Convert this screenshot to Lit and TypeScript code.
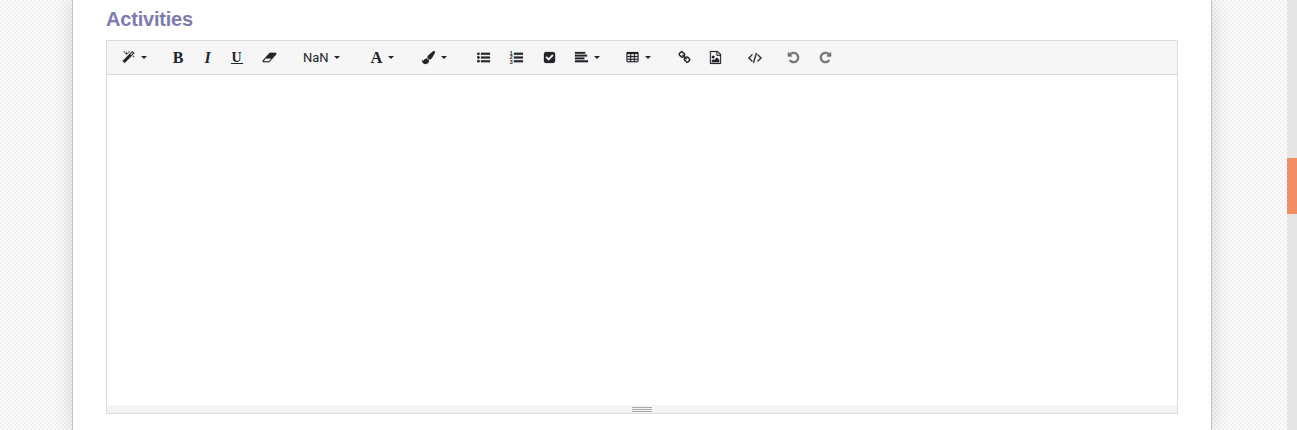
import { LitElement, html, svg, css } from "lit";
import { customElement } from "lit/decorators.js";

interface Tool {
  id: string;
  left: number; // space before the glyph
  width: number; // glyph width
  caret?: boolean;
  text?: string;
  cls?: string;
}

const TOOLS: Tool[] = [
  { id: "magic", left: 13.5, width: 15.5, caret: true },
  { id: "bold", left: 25, width: 12, text: "B", cls: "serif" },
  { id: "italic", left: 17.5, width: 12, text: "I", cls: "serif slanted" },
  { id: "underline", left: 17, width: 12, text: "U", cls: "serif under" },
  { id: "eraser", left: 19, width: 16 },
  { id: "size", left: 25, width: 26.5, text: "NaN", caret: true, cls: "label" },
  { id: "font", left: 30, width: 13, text: "A", caret: true, cls: "serif font" },
  { id: "brush", left: 27, width: 15, caret: true },
  { id: "ul", left: 29.5, width: 14 },
  { id: "ol", left: 19, width: 14 },
  { id: "check", left: 19, width: 14 },
  { id: "align", left: 18, width: 14, caret: true },
  { id: "table", left: 26, width: 14.5, caret: true },
  { id: "link", left: 26, width: 14 },
  { id: "image", left: 17, width: 14 },
  { id: "code", left: 25, width: 15, cls: "strong" },
  { id: "undo", left: 24, width: 14, cls: "muted strong" },
  { id: "redo", left: 18, width: 14, cls: "muted strong" },
];

const UNDO =
  "M1664 896q0 156-61 298t-164 245-245 164-298 61q-172 0-327-72.500t-264-204.500q-7-10-6.500-22.500t8.500-20.500l137-138q10-9 25-9 16 2 23 12 73 95 179 147t225 52q104 0 198.500-40.500t163.500-109.500 109.500-163.500 40.500-198.500-40.500-198.500-109.500-163.500-163.500-109.500-198.500-40.500q-98 0-188 35.500t-160 101.500l137 138q31 30 14 69-17 40-59 40h-448q-26 0-45-19t-19-45v-448q0-42 40-59 39-17 69 14l130 129q107-101 244.500-156.500t284.500-55.500q156 0 298 61t245 164 164 245 61 298z";

const LINES = svg`<path d="M544 256h1248v256H544zM544 768h1248v256H544zM544 1280h1248v256H544z"/>`;

const ICONS: Record<string, unknown> = {
  magic: svg`<path d="M1254 581l293-293-107-107-293 293zm447-293q0 27-18 45l-1286 1286q-18 18-45 18t-45-18l-198-198q-18-18-18-45t18-45l1286-1286q18-18 45-18t45 18l198 198q18 18 18 45zm-1351-190l98 30-98 30-30 98-30-98-98-30 98-30 30-98zm350 162l196 60-196 60-60 196-60-196-196-60 196-60 60-196zm930 478l98 30-98 30-30 98-30-98-98-30 98-30 30-98zm-640-640l98 30-98 30-30 98-30-98-98-30 98-30 30-98z"/>`,
  eraser: svg`<path transform="translate(64 0)" d="M896 1408l336-384h-768l-336 384h768zm1013-1077q15 34 9.500 71.500t-30.500 65.500l-896 1024q-38 44-96 44h-768q-38 0-69.500-20.500t-47.500-54.500q-15-34-9.500-71.500t30.500-65.500l896-1024q38-44 96-44h768q38 0 69.500 20.500t47.500 54.500z"/>`,
  brush: svg`<path d="M1615 0q70 0 122 46.500t52 116.500q0 63-45 151-332 629-465 752-97 91-218 91-126 0-216.500-92.500t-90.500-219.500q0-128 92-212l638-579q59-54 131-54zm-909 1034q39 76 106.500 130t150.500 76l1 71q4 213-129.500 347t-348.500 134q-123 0-218-46.500t-152.500-127.500-86.500-183-29-220q7 5 41 30t62 44.500 59 36.500 46 17q41 0 55-37 25-66 57.500-112.500t69.500-76 88-47.500 103-25.500 125-10.500z"/>`,
  ul: svg`<circle cx="192" cy="384" r="192"/><circle cx="192" cy="896" r="192"/><circle cx="192" cy="1408" r="192"/>${LINES}`,
  ol: svg`${LINES}<g font-family="Liberation Sans" font-weight="700" font-size="720"><text x="-20" y="520">1</text><text x="-20" y="1140">2</text><text x="-20" y="1770">3</text></g>`,
  check: svg`<path d="M813 1299l614-614q19-19 19-45t-19-45l-102-102q-19-19-45-19t-45 19l-467 467-211-211q-19-19-45-19t-45 19l-102 102q-19 19-19 45t19 45l358 358q19 19 45 19t45-19zm851-883v960q0 119-84.500 203.500t-203.500 84.500h-960q-119 0-203.500-84.500t-84.500-203.500v-960q0-119 84.500-203.500t203.500-84.500h960q119 0 203.500 84.500t84.500 203.500z"/>`,
  align: svg`<path d="M0 128h1408v256H0zM0 512h1664v256H0zM0 896h1280v256H0zM0 1280h1792v256H0z"/>`,
  table: svg`<path fill-rule="evenodd" d="M224 128h1344q160 0 160 160v1088q0 160-160 160H224q-160 0-160-160V288q0-160 160-160zM200 410v270h370V410zM710 410v270h370V410zM1220 410v270h370V410zM200 820v240h370V820zM710 820v240h370V820zM1220 820v240h370V820zM200 1190v210h370v-210zM710 1190v210h370v-210zM1220 1190v210h370v-210z"/>`,
  link: svg`<path d="M1520 1216q0-40-28-68l-208-208q-28-28-68-28-42 0-72 32 3 3 19 18.500t21.500 21.500 15 19 13 25.500 3.500 27.500q0 40-28 68t-68 28q-15 0-27.500-3.500t-25.500-13-19-15-21.500-21.500-18.500-19q-33 31-33 73 0 40 28 68l206 207q27 27 68 27 40 0 68-26l147-146q28-28 28-67zm-703-705q0-40-28-68l-206-207q-28-28-68-28-39 0-68 27l-147 146q-28 28-28 67 0 40 28 68l208 208q27 27 68 27 42 0 72-31-3-3-19-18.500t-21.500-21.500-15-19-13-25.500-3.500-27.500q0-40 28-68t68-28q15 0 27.500 3.500t25.500 13 19 15 21.500 21.500 18.500 19q33-31 33-73zm895 705q0 120-85 203l-147 146q-83 83-203 83-121 0-204-85l-206-207q-83-83-83-203 0-123 88-209l-88-88q-86 88-208 88-120 0-204-84l-208-208q-84-84-84-204t85-203l147-146q83-83 203-83 121 0 204 85l206 207q83 83 83 203 0 123-88 209l88 88q86-88 208-88 120 0 204 84l208 208q84 84 84 204z"/>`,
  image: svg`<path d="M1596 380q28 28 48 76t20 88v1152q0 40-28 68t-68 28h-1344q-40 0-68-28t-28-68v-1600q0-40 28-68t68-28h896q40 0 88 20t76 48zm-444-244v376h376q-10-29-22-41l-313-313q-12-12-41-22zm384 1528v-1024h-416q-40 0-68-28t-28-68v-416h-768v1536h1280zm-128-448v320h-1024v-192l192-192 128 128 384-384zm-832-192q-80 0-136-56t-56-136 56-136 136-56 136 56 56 136-56 136-136 56z"/>`,
  code: svg`<path d="M617 1399l-50 50q-10 10-23 10t-23-10l-466-466q-10-10-10-23t10-23l466-466q10-10 23-10t23 10l50 50q10 10 10 23t-10 23l-393 393 393 393q10 10 10 23t-10 23zm591-1067l-373 1291q-4 13-15.500 19.500t-23.500 2.500l-62-17q-13-4-19.500-15.500t-2.500-24.500l373-1291q4-13 15.500-19.500t23.500-2.500l62 17q13 4 19.500 15.500t2.500 24.500zm657 651l-466 466q-10 10-23 10t-23-10l-50-50q-10-10-10-23t10-23l393-393-393-393q-10-10-10-23t10-23l50-50q10-10 23-10t23 10l466 466q10 10 10 23t-10 23z"/>`,
  undo: svg`<path d=${UNDO} />`,
  redo: svg`<path transform="translate(1792 0) scale(-1 1)" d=${UNDO} />`,
};

@customElement("app-root")
export class AppRoot extends LitElement {
  static styles = css`
    :host {
      display: flex;
      height: 430px;
      overflow: hidden;
      font-family: Roboto, sans-serif;
      color: #212529;
    }
    * {
      box-sizing: border-box;
    }
    .backdrop {
      flex: 1;
      display: flex;
      padding-left: 72px;
      background: repeating-conic-gradient(#efefef 0 25%, #fff 0 50%) 0 0 / 4px 4px;
    }
    .page {
      width: 1140px;
      padding: 0 33px;
      background: #fff;
      border: solid #c3c3cf;
      border-width: 0 1px;
      box-shadow: 0 0 20px rgba(0, 0, 0, 0.15);
    }
    h2 {
      margin: 0;
      height: 40px;
      padding-top: 7px;
      font: 700 20px/24px "Liberation Sans", sans-serif;
      letter-spacing: -0.2px;
      color: #7c7bad;
    }
    .editor {
      height: 374px;
      display: flex;
      flex-direction: column;
      border: 1px solid #dcdcdc;
    }
    .toolbar {
      display: flex;
      align-items: flex-start;
      padding-top: 6px;
      height: 34px;
      background: #f6f6f6;
      border-bottom: 1px solid #d8d8d8;
    }
    .tool {
      display: flex;
      align-items: center;
      height: 21px;
      white-space: nowrap;
    }
    .glyph {
      flex: none;
      display: flex;
      justify-content: center;
    }
    svg {
      display: block;
      height: 13px;
      fill: currentColor;
      overflow: visible;
    }
    svg path {
      stroke: currentColor;
      stroke-width: 24px;
    }
    .strong path {
      stroke-width: 60px;
    }
    .caret {
      margin-left: 5px;
      border: solid transparent;
      border-width: 3px 3px 0;
      border-top-color: #212529;
    }
    .label {
      font-size: 13px;
    }
    .serif {
      font: 700 16px/21px "Liberation Serif", serif;
    }
    .slanted {
      font-style: italic;
    }
    .under .glyph {
      font-size: 14px;
      line-height: 11px;
      height: 12px;
      border-bottom: 1px solid #212529;
    }
    .font {
      font-size: 16.5px;
    }
    .muted {
      color: #6f7376;
    }
    .area {
      flex: 1;
    }
    .grip {
      height: 8px;
      padding-top: 2px;
      display: flex;
      flex-direction: column;
      align-items: center;
      gap: 1px;
      background: #f4f4f4;
    }
    .grip i {
      width: 20px;
      height: 1px;
      background: #a9a9a9;
    }
    .scroll {
      width: 10px;
      padding-top: 158px;
      background: #e5e5e5;
    }
    .thumb {
      height: 56px;
      background: #f08e66;
    }
  `;

  private tool(t: Tool) {
    const wide = t.id === "eraser" ? 2048 : t.id === "code" ? 1920 : 1792;
    return html`<div class="tool ${t.cls ?? ""}" style="margin-left:${t.left}px">
      <span class="glyph" style="width:${t.width}px"
        >${t.text ?? html`<svg width=${(wide * 13) / 1792} viewBox="0 0 ${wide} 1792">${ICONS[t.id]}</svg>`}</span
      >
      ${t.caret ? html`<span class="caret"></span>` : ""}
    </div>`;
  }

  render() {
    return html`
      <div class="backdrop">
        <main class="page">
          <h2>Activities</h2>
          <section class="editor">
            <div class="toolbar">${TOOLS.map((t) => this.tool(t))}</div>
            <div class="area"></div>
            <div class="grip"><i></i><i></i><i></i></div>
          </section>
        </main>
      </div>
      <div class="scroll"><div class="thumb"></div></div>
    `;
  }
}
